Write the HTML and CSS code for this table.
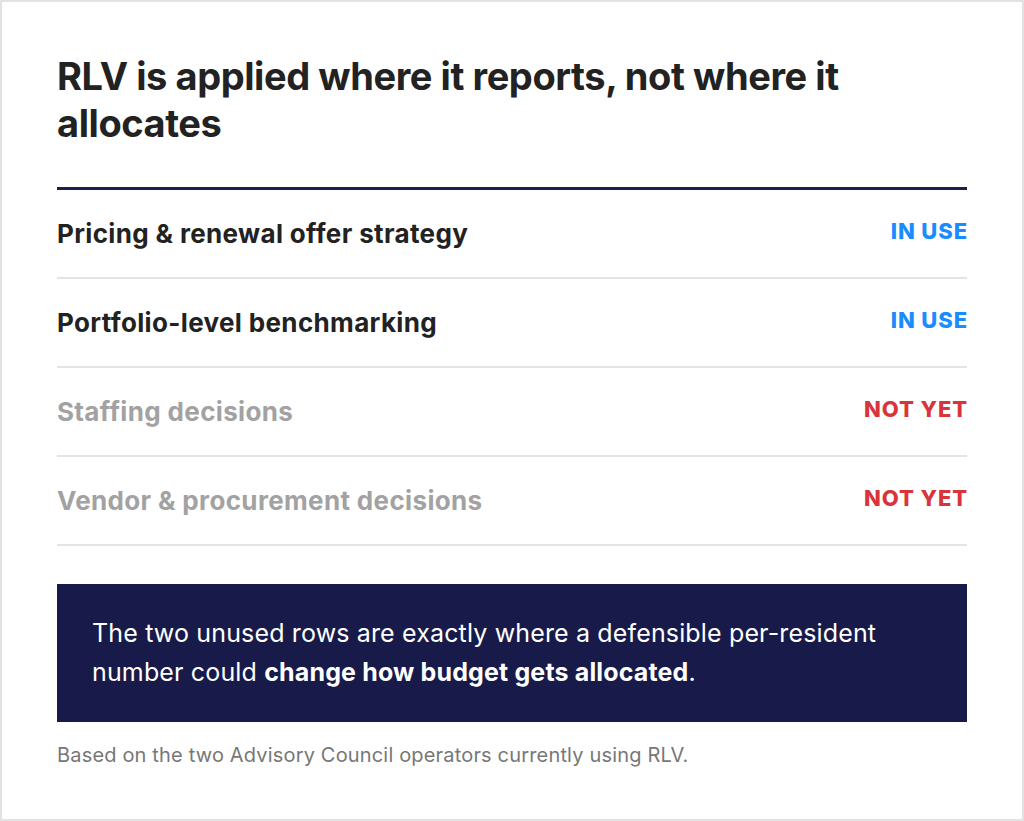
FILE: index.html
```html
<!DOCTYPE html>
<html>
<head>
<meta charset="utf-8">
<link rel="stylesheet" href="styles.css">
</head>
<body>
<div class="card">
  <h1 class="title">RLV is applied where it reports, not where it allocates</h1>
  <div class="list">
    <div class="row">
      <span class="label">Pricing &amp; renewal offer strategy</span>
      <span class="status status-use">IN USE</span>
    </div>
    <div class="row">
      <span class="label">Portfolio-level benchmarking</span>
      <span class="status status-use">IN USE</span>
    </div>
    <div class="row row-muted">
      <span class="label">Staffing decisions</span>
      <span class="status status-not">NOT YET</span>
    </div>
    <div class="row row-muted">
      <span class="label">Vendor &amp; procurement decisions</span>
      <span class="status status-not">NOT YET</span>
    </div>
  </div>
  <div class="callout">
    <p class="callout-text">The two unused rows are exactly where a defensible per-resident number could <strong>change how budget gets allocated</strong>.</p>
  </div>
  <p class="note">Based on the two Advisory Council operators currently using RLV.</p>
</div>
</body>
</html>
```

FILE: styles.css
```css
html, body {
  margin: 0;
  padding: 0;
  background: #ffffff;
}

.card {
  box-sizing: border-box;
  width: 1024px;
  height: 821px;
  border: 2px solid #e2e2e2;
  padding: 51px 55px 0 55px;
  font-family: Inter, "Liberation Sans", sans-serif;
  color: #222222;
}

.title {
  margin: 0;
  width: 820px;
  font-size: 38px;
  line-height: 47px;
  font-weight: 700;
  letter-spacing: -0.42px;
  color: #222222;
}

.list {
  margin-top: 40px;
  border-top: 3px solid #1b1f4b;
}

.row {
  display: flex;
  justify-content: space-between;
  align-items: center;
  height: 87px;
  border-bottom: 2px solid #e4e4e4;
}

.label {
  font-size: 26px;
  font-weight: 700;
  letter-spacing: 0.35px;
  color: #222222;
}

.row-muted .label {
  color: #a2a2a2;
}

.status {
  font-size: 22px;
  font-weight: 800;
  letter-spacing: 0.9px;
  margin-top: -6px;
  margin-right: -1px;
}

.status-use {
  color: #1a8cff;
}

.status-not {
  color: #d9343a;
}

.callout {
  margin-top: 38px;
  background: #181b4a;
  color: #ffffff;
  padding: 30px 35px 30px 35px;
}

.callout-text {
  margin: 0;
  font-size: 25px;
  line-height: 39px;
  letter-spacing: 0.15px;
}

.callout-text strong {
  font-weight: 700;
}

.note {
  margin: 20px 0 0 0;
  font-size: 20px;
  line-height: 26px;
  letter-spacing: 0.17px;
  color: #777777;
}
```
